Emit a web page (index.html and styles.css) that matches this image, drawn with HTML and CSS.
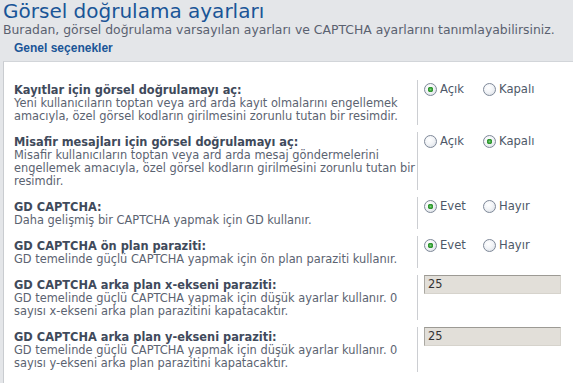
FILE: index.html
```html
<!DOCTYPE html>
<html lang="tr">
<head>
<meta charset="utf-8">
<title>Görsel doğrulama ayarları</title>
<link rel="stylesheet" href="styles.css">
</head>
<body>
<div class="page">
  <h1 class="title">Görsel doğrulama ayarları</h1>
  <p class="intro">Buradan, görsel doğrulama varsayılan ayarları ve CAPTCHA ayarlarını tanımlayabilirsiniz.</p>
  <div class="legend">Genel seçenekler</div>
  <div class="panel">
    <div class="row">
      <div class="dt">
        <div class="label">Kayıtlar için görsel doğrulamayı aç:</div>
        <div class="explain">Yeni kullanıcıların toptan veya ard arda kayıt olmalarını engellemek<br>amacıyla, özel görsel kodların girilmesini zorunlu tutan bir resimdir.</div>
      </div>
      <div class="dd">
        <div class="radios">
          <label class="opt"><span class="radio is-on"></span>Açık</label>
          <label class="opt"><span class="radio"></span>Kapalı</label>
        </div>
      </div>
    </div>
    <div class="row">
      <div class="dt">
        <div class="label">Misafir mesajları için görsel doğrulamayı aç:</div>
        <div class="explain">Misafir kullanıcıların toptan veya ard arda mesaj göndermelerini<br>engellemek amacıyla, özel görsel kodların girilmesini zorunlu tutan bir<br>resimdir.</div>
      </div>
      <div class="dd">
        <div class="radios">
          <label class="opt"><span class="radio"></span>Açık</label>
          <label class="opt"><span class="radio is-on"></span>Kapalı</label>
        </div>
      </div>
    </div>
    <div class="row">
      <div class="dt">
        <div class="label">GD CAPTCHA:</div>
        <div class="explain">Daha gelişmiş bir CAPTCHA yapmak için GD kullanır.</div>
      </div>
      <div class="dd">
        <div class="radios">
          <label class="opt"><span class="radio is-on"></span>Evet</label>
          <label class="opt"><span class="radio"></span>Hayır</label>
        </div>
      </div>
    </div>
    <div class="row">
      <div class="dt">
        <div class="label">GD CAPTCHA ön plan paraziti:</div>
        <div class="explain">GD temelinde güçlü CAPTCHA yapmak için ön plan paraziti kullanır.</div>
      </div>
      <div class="dd">
        <div class="radios">
          <label class="opt"><span class="radio is-on"></span>Evet</label>
          <label class="opt"><span class="radio"></span>Hayır</label>
        </div>
      </div>
    </div>
    <div class="row">
      <div class="dt">
        <div class="label">GD CAPTCHA arka plan x-ekseni paraziti:</div>
        <div class="explain">GD temelinde güçlü CAPTCHA yapmak için düşük ayarlar kullanır. 0<br>sayısı x-ekseni arka plan parazitini kapatacaktır.</div>
      </div>
      <div class="dd">
        <div class="field">25</div>
      </div>
    </div>
    <div class="row">
      <div class="dt">
        <div class="label">GD CAPTCHA arka plan y-ekseni paraziti:</div>
        <div class="explain">GD temelinde güçlü CAPTCHA yapmak için düşük ayarlar kullanır. 0<br>sayısı y-ekseni arka plan parazitini kapatacaktır.</div>
      </div>
      <div class="dd">
        <div class="field">25</div>
      </div>
    </div>
  </div>
</div>
</body>
</html>
```
FILE: styles.css
```css
html, body {
  margin: 0;
  padding: 0;
  background: #e4e6e9;
}
body {
  font-family: "DejaVu Sans", Verdana, sans-serif;
  font-size: 11.4px;
  color: #425067;
}
.page {
  display: flex;
  flex-direction: column;
  min-height: 100vh;
  box-sizing: border-box;
  padding-left: 3px;
}
.title {
  margin: 0;
  font-size: 20px;
  line-height: 22px;
  font-weight: normal;
  color: #1a5597;
}
.intro {
  margin: 1px 0 0;
  font-size: 12.4px;
  line-height: 14px;
  color: #5a6170;
  white-space: nowrap;
}
.legend {
  margin: 4px 0 0 11px;
  font-family: "Liberation Sans", Arial, sans-serif;
  font-size: 12px;
  line-height: 14px;
  font-weight: bold;
  color: #1a5597;
}
.panel {
  flex: 1;
  margin-top: 6px;
  background: #fff;
  border-top: 1px solid #d2d5d9;
  border-left: 1px solid #c9ccd0;
  padding: 18px 0 0 10px;
}
.row {
  display: flex;
  margin-bottom: 7px;
}
.row:last-child {
  margin-bottom: 0;
}
.dt {
  width: 403px;
  flex: none;
  padding: 4px 0 2px;
  white-space: nowrap;
}
.label {
  font-weight: bold;
  line-height: 13px;
  color: #3f4a5b;
}
.explain {
  line-height: 13px;
  color: #5b6371;
}
.dd {
  flex: 1;
  border-left: 1px solid #ccced2;
  padding-left: 6px;
}
.radios {
  display: flex;
  padding-top: 3px;
  font-size: 11.6px;
  line-height: 13px;
  color: #4e5868;
}
.opt {
  display: inline-flex;
  align-items: center;
  gap: 3px;
}
.opt:first-child {
  width: 59px;
}
.radio {
  width: 13px;
  height: 13px;
  box-sizing: border-box;
  border-radius: 50%;
  border: 1px solid #7e8898;
  background: radial-gradient(circle at 40% 35%, #ffffff 0, #f2f4f7 45%, #d5dae1 100%);
}
.radio.is-on {
  background:
    radial-gradient(circle at 50% 50%, #7fd07f 0, #35a035 1.6px, #2f8f2f 2.6px, rgba(255,255,255,0) 3px),
    radial-gradient(circle at 40% 35%, #ffffff 0, #f2f4f7 45%, #d5dae1 100%);
}
.field {
  width: 137px;
  height: 19px;
  box-sizing: border-box;
  background: #e2dfd9;
  border: 1px solid;
  border-color: #9c9a94 #d6d3cc #d6d3cc #aaa8a2;
  padding-left: 3px;
  line-height: 17px;
  color: #333;
}
```
